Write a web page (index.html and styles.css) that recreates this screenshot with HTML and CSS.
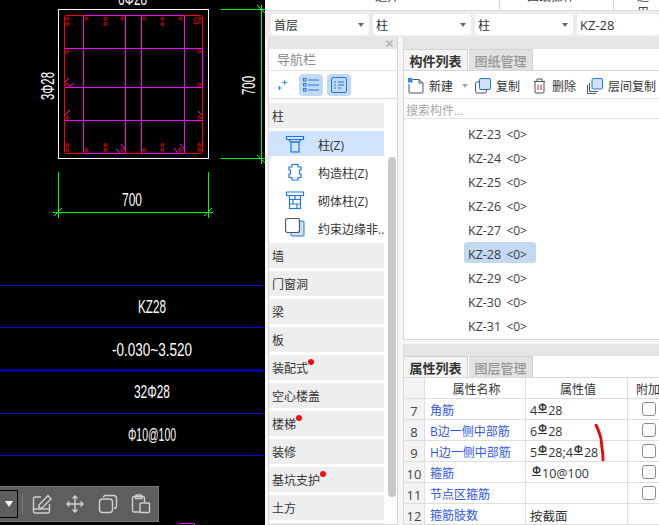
FILE: index.html
```html
<!DOCTYPE html>
<html lang="zh-CN">
<head>
<meta charset="utf-8">
<title>KZ-28</title>
<link rel="stylesheet" href="styles.css">
</head>
<body>
<div class="app">
  <div class="canvas">
    <svg class="drawing" width="265" height="525" viewBox="0 0 265 525">
      <g class="thin" stroke="#0000dc">
        <path d="M0 285.5H265M0 327.5H265M0 413.5H265M0 455.5H265"/>
        <path stroke-width="2" d="M0 370.5H265"/>
      </g>
      <rect class="thin" x="58.5" y="9.5" width="150" height="149" stroke="#fff"/>
      <g class="thin" stroke="#ff00ff">
        <path d="M83.5 15.5V153.5M125.5 15.5V153.5M141.5 15.5V153.5M184.5 15.5V153.5"/>
        <path d="M64.5 48.5H202.5M64.5 87.5H202.5M64.5 120.5H202.5"/>
        <path d="M64.5 48.5V120.5M202.5 48.5V87.5"/>
      </g>
      <path class="thin" stroke="#ff0000" d="M83 15.5H66L64.5 17V152L66 153.5H83M125 153.5H141M185 153.5H201L202.5 152V88M202.5 48V17L201 15.5H66"/>
      <path class="thin" stroke="#ff00ff" d="M84 153.5H125M142 153.5H184M84 15.5H184"/>
      <g class="bars">
        <circle cx="67.5" cy="18.5" r="1.5"/><circle cx="86.5" cy="18.5" r="1.5"/><circle cx="105.5" cy="18.5" r="1.5"/><circle cx="122.5" cy="18.5" r="1.5"/><circle cx="144.5" cy="18.5" r="1.5"/><circle cx="162.5" cy="18.5" r="1.5"/><circle cx="180.5" cy="18.5" r="1.5"/><circle cx="199.5" cy="18.5" r="1.5"/>
        <circle cx="67.5" cy="24" r="1.5"/><circle cx="105.5" cy="24" r="1.5"/><circle cx="162.5" cy="24" r="1.5"/><circle cx="195.5" cy="22.5" r="1.5"/>
        <circle cx="67.5" cy="51.5" r="1.5"/><circle cx="67.5" cy="84.5" r="1.5"/><circle cx="67.5" cy="117.5" r="1.5"/><circle cx="199.5" cy="51.5" r="1.5"/><circle cx="199.5" cy="84.5" r="1.5"/><circle cx="199.5" cy="117.5" r="1.5"/>
        <circle cx="67.5" cy="145" r="1.5"/><circle cx="105.5" cy="145" r="1.5"/><circle cx="162.5" cy="145" r="1.5"/><circle cx="199.5" cy="145" r="1.5"/>
        <circle cx="67.5" cy="150" r="1.5"/><circle cx="86.5" cy="150" r="1.5"/><circle cx="105.5" cy="150" r="1.5"/><circle cx="122.5" cy="150" r="1.5"/><circle cx="144.5" cy="150" r="1.5"/><circle cx="162.5" cy="150" r="1.5"/><circle cx="180.5" cy="150" r="1.5"/><circle cx="199.5" cy="150" r="1.5"/>
      </g>
      <path class="thin" stroke="#ff00ff" d="M65 82L69 78M69 87L74 83M65 115L70 110M198 111L202 115M116 149L120 153M121 144L125 149M174 148L178 153M180 144L184 149"/>
      <path class="thin" stroke="#ff0000" d="M193 20L197 17M197 24L201 21"/>
      <g class="thin" stroke="#00ff00">
        <path d="M221 9.5H265M221 158.5H265M261.5 5V164"/>
        <path d="M58.5 172V218M208.5 172V218M53 212.5H213"/>
        <path d="M257 5L265 13M257 155L265 163M54 216L62 208M204 216L212 208"/>
      </g>
      <path class="thin" stroke="#ff00ff" d="M180.500 525V523.500H194.500V525"/>
      <text class="cad" x="122" y="206" textLength="20" lengthAdjust="spacingAndGlyphs">700</text>
      <text class="cad" x="118" y="5" textLength="29" lengthAdjust="spacingAndGlyphs">6Φ28</text>
      <text class="cad" transform="translate(255 95) rotate(-90)" textLength="19" lengthAdjust="spacingAndGlyphs">700</text>
      <text class="cad" transform="translate(53.500 100) rotate(-90)" textLength="28" lengthAdjust="spacingAndGlyphs">3Φ28</text>
      <text class="cad" x="138" y="313" textLength="28" lengthAdjust="spacingAndGlyphs">KZ28</text>
      <text class="cad" x="112" y="356" textLength="80" lengthAdjust="spacingAndGlyphs">-0.030~3.520</text>
      <text class="cad" x="134" y="398" textLength="36" lengthAdjust="spacingAndGlyphs">32Φ28</text>
      <text class="cad" x="128" y="441" textLength="48" lengthAdjust="spacingAndGlyphs">Φ10@100</text>
    </svg>
    <div class="float-bar">
      <div class="float-drop"><span class="float-caret"></span></div>
      <span class="float-sep"></span>
      <svg class="float-icon" width="20" height="20" viewBox="0 0 20 20"><path d="M9 3H3A1.500 1.500 0 0 0 1.500 4.500V17.500A1.500 1.500 0 0 0 3 19H15A2 2 0 0 0 17.500 17V10"/><path d="M2 15H17"/><path d="M7 11L7 14H10L19 5L16 1.500Z"/></svg>
      <svg class="float-icon" width="20" height="20" viewBox="0 0 20 20"><path d="M10 2V18M2 10H18M7.500 4.500L10 2L12.500 4.500M7.500 15.500L10 18L12.500 15.500M4.500 7.500L2 10L4.500 12.500M15.500 7.500L18 10L15.500 12.500"/></svg>
      <svg class="float-icon" width="20" height="20" viewBox="0 0 20 20"><rect x="1.500" y="5" width="13" height="13.500" rx="3"/><path d="M5.500 3.500A2 2 0 0 1 7.500 1.500H15.500A3 3 0 0 1 18.500 4.500V12A2.500 2.500 0 0 1 16 14.500"/></svg>
      <svg class="float-icon" width="20" height="20" viewBox="0 0 20 20"><path d="M9 18H3A1.500 1.500 0 0 1 1.500 16.500V4A1.500 1.500 0 0 1 3 2.500H12A1.500 1.500 0 0 1 13.500 4V8"/><path d="M4.500 4.500V2.500A1.500 1.500 0 0 1 6 1H9.500A1.500 1.500 0 0 1 11 2.500V4.500Z"/><rect x="9" y="9" width="9.500" height="9.500" rx="1"/></svg>
    </div>
  </div>

  <div class="side">
    <div class="ribbon">
      <div class="ribbon-group ribbon-a">选择</div>
      <div class="ribbon-group ribbon-b">图纸操作</div>
      <div class="ribbon-group ribbon-c">通用</div>
    </div>
    <div class="filters">
      <div class="combo combo-a"><span>首层</span><i class="caret"></i></div>
      <div class="combo combo-b"><span>柱</span><i class="caret"></i></div>
      <div class="combo combo-b"><span>柱</span><i class="caret"></i></div>
      <div class="combo combo-c"><span>KZ-28</span></div>
    </div>

    <div class="panels">
      <section class="nav">
        <div class="strip nav-strip"><svg width="9" height="9" viewBox="0 0 9 9"><path d="M1.500 1.500L7.500 7.500M7.500 1.500L1.500 7.500" stroke="#a8a8a8" stroke-width="1.200" fill="none"/></svg></div>
        <div class="nav-title">导航栏</div>
        <div class="nav-tools">
          <svg class="plain" width="12" height="12" viewBox="0 0 14 14"><path d="M9 1V7M6 4H12M3 8V13M.5 10.500H5.500" stroke="#1f78e6" stroke-width="1" fill="none"/></svg>
          <span class="tool-on tool-first"><svg width="16" height="14" viewBox="0 0 16 14"><g fill="none" stroke="#1f78e6"><rect x=".5" y=".5" width="2.500" height="2.500"/><rect x=".5" y="5.500" width="2.500" height="2.500"/><rect x=".5" y="10.500" width="2.500" height="2.500"/><path d="M5 2H16M5 7H16M5 12H16"/></g></svg></span>
          <span class="tool-on"><svg width="16" height="16" viewBox="0 0 16 16"><g fill="none" stroke="#1f78e6"><rect x=".5" y=".5" width="15" height="15" rx="1.500"/><path d="M3 5H5M7 5H13M3 8H5M7 8H13M3 11H5M7 11H10"/></g></svg></span>
        </div>
        <div class="nav-list">
          <div class="nav-group">柱</div>
          <div class="nav-item is-active">
            <svg width="20" height="20" viewBox="0 0 20 20"><g fill="none" stroke="#1f78e6" stroke-width="1.200"><path d="M1.500 2.500H18.500V5.500H1.500ZM3.500 5.500L6 8H14L16.500 5.500"/><rect x="6" y="8" width="8" height="10"/></g></svg>
            <span>柱(Z)</span>
          </div>
          <div class="nav-item">
            <svg width="20" height="20" viewBox="0 0 20 20"><path fill="none" stroke="#1f78e6" stroke-width="1.200" d="M7 2.500H13V5H16V8H14.500V12H16V15.500H13V18H7V15.500H4V12H5.500V8H4V5H7Z"/></svg>
            <span>构造柱(Z)</span>
          </div>
          <div class="nav-item">
            <svg width="20" height="20" viewBox="0 0 20 20"><g fill="none" stroke="#1f78e6" stroke-width="1.200"><path d="M1.500 2H18.500V5.500H1.500Z"/><rect x="4.500" y="5.500" width="11" height="13"/><path d="M4.500 9.500H15.500M4.500 14H15.500M10 5.500V9.500M8 9.500V14M12 14V18.500"/></g></svg>
            <span>砌体柱(Z)</span>
          </div>
          <div class="nav-item">
            <svg width="20" height="20" viewBox="0 0 20 20"><rect x="6" y="3" width="13" height="15" rx="1" fill="#cfe2f9" stroke="#1f78e6"/><rect x=".5" y=".5" width="14" height="14" rx="2" fill="#fff" stroke="#4b5563" stroke-width="1.200"/></svg>
            <span class="clip">约束边缘非...</span>
          </div>
          <div class="nav-group">墙</div>
          <div class="nav-group">门窗洞</div>
          <div class="nav-group">梁</div>
          <div class="nav-group">板</div>
          <div class="nav-group"><span class="flag">装配式</span></div>
          <div class="nav-group">空心楼盖</div>
          <div class="nav-group"><span class="flag">楼梯</span></div>
          <div class="nav-group">装修</div>
          <div class="nav-group"><span class="flag">基坑支护</span></div>
          <div class="nav-group">土方</div>
          <div class="nav-group">基础</div>
        </div>
        <div class="nav-scroll"></div>
      </section>

      <div class="stack">
        <section class="comp">
          <div class="strip"></div>
          <div class="tabs">
            <span class="tab tab-on">构件列表</span>
            <span class="tab">图纸管理</span>
          </div>
          <div class="actions">
            <span class="action">
              <svg width="16" height="16" viewBox="0 0 16 16"><path d="M5 1.500H11L15 5V14A1 1 0 0 1 14 15H2A1 1 0 0 1 1 14V6" fill="none" stroke="#4b5563"/><path d="M11 1.500V5H15" fill="none" stroke="#4b5563"/><rect x="0" y="0" width="4.500" height="4.500" fill="#3b82e6"/></svg>
              新建<i class="caret caret-new"></i>
            </span>
            <span class="action">
              <svg width="16" height="16" viewBox="0 0 16 16"><rect x=".5" y="4" width="11" height="11" rx="1.500" fill="#fff" stroke="#4b5563"/><rect x="4.500" y=".5" width="11" height="11" rx="1.500" fill="#cfe2f9" stroke="#1f78e6"/></svg>
              复制
            </span>
            <span class="action action-del">
              <svg width="13" height="16" viewBox="0 0 13 16"><path d="M1 3.500H12M4 3.500V1H9V3.500M2 3.500V14A1 1 0 0 0 3 15H10A1 1 0 0 0 11 14V3.500" fill="none" stroke="#4b5563"/><path d="M5 6.500V12M8 6.500V12" stroke="#d92020"/></svg>
              删除
            </span>
            <span class="action action-floor">
              <svg width="16" height="16" viewBox="0 0 16 16"><path d="M2.500 5V13.500H11M.5 7V15.500H9" fill="none" stroke="#4b5563"/><rect x="5" y=".5" width="10.500" height="10.500" rx="1.500" fill="#cfe2f9" stroke="#1f78e6"/></svg>
              层间复制
            </span>
          </div>
          <div class="search">搜索构件...</div>
          <ul class="parts">
            <li>KZ-23 <small>&lt;0&gt;</small></li>
            <li>KZ-24 <small>&lt;0&gt;</small></li>
            <li>KZ-25 <small>&lt;0&gt;</small></li>
            <li>KZ-26 <small>&lt;0&gt;</small></li>
            <li>KZ-27 <small>&lt;0&gt;</small></li>
            <li class="is-picked">KZ-28 <small>&lt;0&gt;</small></li>
            <li>KZ-29 <small>&lt;0&gt;</small></li>
            <li>KZ-30 <small>&lt;0&gt;</small></li>
            <li>KZ-31 <small>&lt;0&gt;</small></li>
          </ul>
        </section>

        <section class="props">
          <div class="strip"></div>
          <div class="tabs">
            <span class="tab tab-on">属性列表</span>
            <span class="tab">图层管理</span>
          </div>
          <div class="grid">
            <div class="cell idx head"></div><div class="cell head">属性名称</div><div class="cell head">属性值</div><div class="cell head add">附加</div>
            <div class="cell idx">7</div><div class="cell link">角筋</div><div class="cell val">4<b class="rebar">Φ</b>28</div><div class="cell add"><i class="check"></i></div>
            <div class="cell idx">8</div><div class="cell link">B边一侧中部筋</div><div class="cell val">6<b class="rebar">Φ</b>28</div><div class="cell add"><i class="check"></i></div>
            <div class="cell idx">9</div><div class="cell link">H边一侧中部筋</div><div class="cell val">5<b class="rebar">Φ</b>28;4<b class="rebar">Φ</b>28</div><div class="cell add"><i class="check"></i></div>
            <div class="cell idx">10</div><div class="cell link">箍筋</div><div class="cell val val-in"><b class="rebar">Φ</b>10@100</div><div class="cell add"><i class="check"></i></div>
            <div class="cell idx">11</div><div class="cell link">节点区箍筋</div><div class="cell val"></div><div class="cell add"><i class="check"></i></div>
            <div class="cell idx">12</div><div class="cell link">箍筋肢数</div><div class="cell val">按截面</div><div class="cell add"></div>
          </div>
        </section>
      </div>
    </div>
    <svg class="scrawl" width="12" height="38" viewBox="0 0 12 38"><path d="M2 1C4 5 5 8 6 11C8 16 7 20 8 24C9 29 9 32 9 36" fill="none" stroke="#f00000" stroke-width="2.800" stroke-linecap="round"/></svg>
  </div>
</div>
</body>
</html>
```
FILE: styles.css
```css
* { box-sizing: border-box; }
html, body { margin: 0; padding: 0; height: 100%; overflow: hidden; }
body {
  font-family: "Open Sans", "Noto Sans CJK SC", sans-serif;
  font-size: 12px;
  color: #333;
  background: #f2f2f2;
}
.app { display: flex; width: 659px; height: 525px; overflow: hidden; }

/* CAD canvas */
.canvas { position: relative; flex: 0 0 265px; height: 525px; background: #000; }
.drawing { display: block; }
.thin { fill: none; stroke-width: 1; }
.bars circle { fill: none; stroke: #ff0000; stroke-width: 1; }
.cad { fill: #fff; font-family: "Liberation Sans", sans-serif; font-size: 19px; }
.float-bar {
  position: absolute; left: 0; top: 486px; width: 159px; height: 36px;
  display: flex; align-items: center; gap: 13px;
  background: #5e5e5e; border: 1px solid #777; border-left: 0;
}
.float-drop {
  flex: 0 0 18px; height: 28px; margin-right: -9px;
  display: flex; align-items: center; justify-content: center;
  background: #5e5e5e; border: 1px solid #000; border-left: 0;
}
.float-caret { width: 0; height: 0; border: 4px solid transparent; border-top: 6px solid #fff; border-bottom: 0; }
.float-sep { width: 1px; height: 20px; background: #808080; margin-right: -4px; }
.float-icon { fill: none; stroke: #d0d0d0; stroke-width: 1.400; flex: none; }

/* side */
.side { position: relative; flex: 1; display: flex; flex-direction: column; min-width: 0; }
.ribbon { display: flex; height: 11px; background: #fff; border-bottom: 1px solid #dcdcdc; overflow: hidden; color: #444; line-height: 16px; }
.ribbon-group { margin-top: -11px; }
.ribbon-a { flex: 0 0 235px; padding-left: 110px; border-right: 1px solid #d5d5d5; }
.ribbon-b { flex: 0 0 114px; padding-left: 27px; border-right: 1px solid #d5d5d5; }
.ribbon-c { padding-left: 23px; }
.filters { display: flex; gap: 4px; height: 26px; padding: 3px 0 0 6px; background: #ececec; }
.combo {
  height: 21px; display: flex; align-items: center; justify-content: space-between;
  padding: 0 5px 0 3px; background: #fff; border-radius: 4px; font-size: 12px; color: #333;
}
.combo-a { flex: 0 0 98px; }
.combo-b { flex: 0 0 98px; }
.combo-c { flex: 1; font-size: 13px; }
.caret { width: 0; height: 0; border: 3px solid transparent; border-top: 4px solid #666; border-bottom: 0; }

.panels { flex: 1; display: flex; gap: 5px; padding-left: 3px; min-height: 0; background: #f6f6f6; }
.strip { height: 12px; background: #e5e5e5; }

/* nav */
.nav { position: relative; flex: 0 0 130px; background: #fff; border: 1px solid #d8d8d8; border-top: 0; overflow: hidden; }
.nav-strip { display: flex; justify-content: flex-end; align-items: center; padding-right: 3px; }
.nav-title { height: 22px; padding-left: 8px; line-height: 21px; font-size: 13px; color: #8a8a8a; border-bottom: 1px solid #e2e2e2; }
.nav-tools { display: flex; align-items: center; height: 28px; padding-left: 8px; border-bottom: 1px solid #dcdcdc; }
.plain { flex: none; }
.tool-on { width: 24px; height: 22px; margin-left: 4px; display: flex; align-items: center; justify-content: center; background: #c2d9f3; border-radius: 4px; }
.tool-first { margin-left: 10px; }
.nav-list { width: 115px; padding-top: 4px; }
.nav-group { height: 25px; margin-bottom: 3px; padding-left: 3px; line-height: 27px; background: #eeeeee; color: #333; }
.nav-item { height: 25px; margin-bottom: 3px; display: flex; align-items: center; gap: 13px; padding-left: 16px; white-space: nowrap; }
.nav-item svg { flex: none; }
.nav-item span { padding-top: 2px; }
.nav-item.is-active { background: #cfe3fb; }
.clip { overflow: hidden; }
.flag { position: relative; }
.flag::after { content: ""; position: absolute; top: -1px; right: -6px; width: 6px; height: 6px; border-radius: 50%; background: #f50d0d; }
.nav-scroll { position: absolute; left: 119px; top: 120px; width: 8px; height: 340px; background: #c9c9c9; border-radius: 4px; }

/* right */
.stack { flex: 1; display: flex; flex-direction: column; gap: 4px; min-width: 0; }
.comp { flex: 0 0 303px; display: flex; flex-direction: column; background: #fff; border-left: 1px solid #d8d8d8; border-bottom: 1px solid #d8d8d8; }
.props { flex: 1; background: #fff; border-left: 1px solid #d8d8d8; overflow: hidden; }
.tabs { display: flex; height: 22px; gap: 1px; background: #fff; border-bottom: 1px solid #d8d8d8; }
.tab { width: 64px; text-align: center; line-height: 23px; font-size: 13px; color: #959595; background: #e2e2e2; border: 1px solid #d0d0d0; border-bottom: 0; border-left: 0; font-weight: 500; }
.tab-on { background: #f4f4f4; color: #333; font-weight: 700; }
.actions { display: flex; align-items: center; height: 28px; padding: 3px 0 0 4px; gap: 7px; border-bottom: 1px solid #e2e2e2; }
.action { display: flex; align-items: center; gap: 5px; white-space: nowrap; }
.caret-new { margin-left: 4px; border-top-color: #aaa; }
.action-del { margin-left: 6px; }
.action-del svg { margin-right: 1px; }
.action-floor { margin-left: 4px; }
.search { height: 20px; padding-left: 2px; line-height: 23px; color: #a8a8a8; border-bottom: 1px solid #e2e2e2; overflow: hidden; }
.parts { list-style: none; margin: 0; padding: 3px 0 0 60px; flex: 1; overflow: hidden; }
.parts li { width: 72px; height: 21px; margin-bottom: 3px; padding-left: 4px; line-height: 25px; white-space: nowrap; font-size: 12.500px; color: #3c3c3c; border-radius: 3px; overflow: hidden; }
.parts small { font-size: 12px; margin-left: 2px; }
.parts .is-picked { background: #c3d9f1; }

.grid { display: grid; grid-template-columns: 21px 101px 102px 31px; grid-auto-rows: 21px; }
.cell { display: flex; align-items: center; padding: 2px 0 0 4px; border-right: 1px solid #dedede; border-bottom: 1px solid #dedede; white-space: nowrap; overflow: hidden; font-size: 12px; }
.head { justify-content: center; padding-left: 3px; font-size: 12px; }
.idx { justify-content: center; padding: 3px 0 0; background: #f3f3f3; font-size: 13px; color: #444; }
.add { justify-content: flex-start; padding: 0 0 0 1px; border-right: 0; }
.head.add { justify-content: flex-start; padding: 2px 0 0 8px; }
.cell.link { color: #2f55f0; padding-left: 5px; }
.val { font-size: 12.500px; }
.val-in { padding-left: 5px; }
.check { width: 14px; height: 14px; margin-left: 13px; border: 1px solid #8a8a8a; border-radius: 3px; background: #fff; }
.rebar { display: inline-block; width: 9px; margin: -5px 1px 0; text-align: center; font-size: 10px; font-weight: 700; line-height: 10px; border-bottom: 1px solid #333; }

.scrawl { position: absolute; left: 329px; top: 424px; pointer-events: none; }
```
